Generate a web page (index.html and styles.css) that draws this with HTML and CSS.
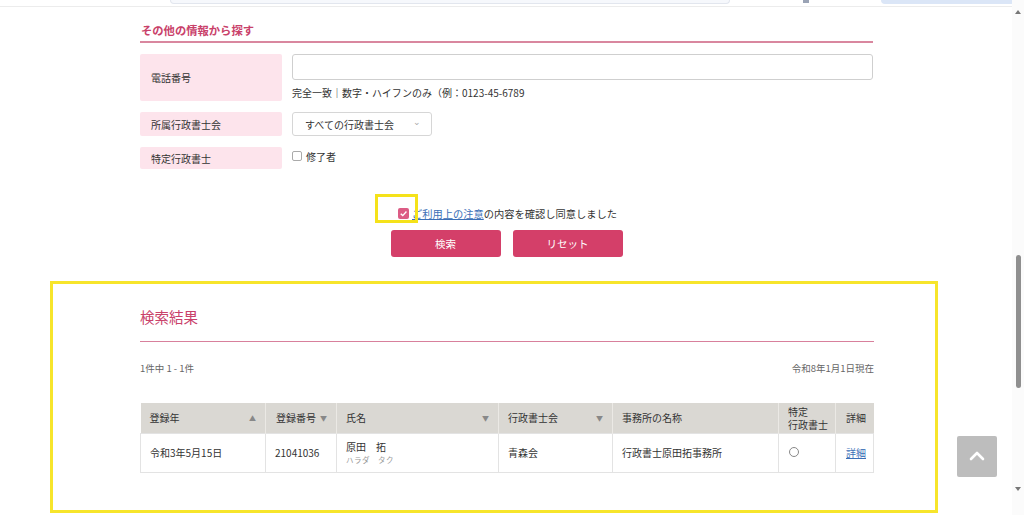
FILE: index.html
```html
<!DOCTYPE html>
<html lang="ja">
<head>
<meta charset="utf-8">
<link rel="stylesheet" href="styles.css">
</head>
<body>
<div class="topstrip">
  <div class="ts-search"></div>
  <div class="ts-icon"></div>
  <div class="ts-btn"></div>
</div>

<section class="other">
  <h2 class="sec-title">その他の情報から探す</h2>
  <div class="form-row row-tel">
    <div class="label">電話番号</div>
    <div class="field">
      <div class="input"></div>
      <p class="help">完全一致｜数字・ハイフンのみ（例：0123-45-6789</p>
    </div>
  </div>
  <div class="form-row row-sel">
    <div class="label">所属行政書士会</div>
    <div class="field">
      <div class="select"><span>すべての行政書士会</span><span class="chev">&#8964;</span></div>
    </div>
  </div>
  <div class="form-row row-chk">
    <div class="label">特定行政書士</div>
    <div class="field check-field">
      <span class="box"></span><span>修了者</span>
    </div>
  </div>

  <div class="agree">
    <span class="agree-inner">
      <span class="hl"></span>
      <span class="pinkbox"><svg viewBox="0 0 12 12" width="11" height="11"><path d="M3 6.2 L5.2 8.3 L9.2 3.8" fill="none" stroke="#fff" stroke-width="1.5"/></svg></span>
      <span class="agree-text"><a class="link">ご利用上の注意</a>の内容を確認し同意しました</span>
    </span>
  </div>
  <div class="buttons">
    <button class="btn">検索</button>
    <button class="btn">リセット</button>
  </div>
</section>

<section class="results">
  <h2 class="res-title">検索結果</h2>
  <div class="meta">
    <span>1件中 1 - 1件</span>
    <span>令和8年1月1日現在</span>
  </div>
  <table class="tbl">
    <colgroup>
      <col class="c1"><col class="c2"><col class="c3"><col class="c4"><col class="c5"><col class="c6"><col class="c7">
    </colgroup>
    <thead>
      <tr>
        <th><div class="th-in"><span>登録年</span><span class="arr">&#9650;</span></div></th>
        <th class="narrow"><div class="th-in tight"><span>登録番号</span><span class="arr">&#9660;</span></div></th>
        <th><div class="th-in"><span>氏名</span><span class="arr">&#9660;</span></div></th>
        <th><div class="th-in"><span>行政書士会</span><span class="arr">&#9660;</span></div></th>
        <th>事務所の名称</th>
        <th class="two"><div>特定</div><div>行政書士</div></th>
        <th class="narrow">詳細</th>
      </tr>
    </thead>
    <tbody>
      <tr>
        <td>令和3年5月15日</td>
        <td>21041036</td>
        <td><div class="name">原田　拓</div><div class="kana">ハラダ　タク</div></td>
        <td>青森会</td>
        <td>行政書士原田拓事務所</td>
        <td><span class="circle"></span></td>
        <td class="narrow"><a class="link">詳細</a></td>
      </tr>
    </tbody>
  </table>
</section>

<div class="totop"><svg viewBox="0 0 40 40" width="40" height="40"><path d="M14 23 L20 17 L26 23" fill="none" stroke="#fff" stroke-width="2.6" stroke-linecap="round" stroke-linejoin="round"/></svg></div>

<div class="scrollbar">
  <span class="sb-up"></span>
  <span class="sb-thumb"></span>
  <span class="sb-down"></span>
</div>
</body>
</html>
```

FILE: styles.css
```css
* { box-sizing: border-box; }
html, body { margin: 0; padding: 0; height: 515px; overflow: hidden; }
body {
  background: #fff;
  font-family: "Noto Sans CJK JP", "Noto Sans", sans-serif;
  color: #333;
  font-size: 10px;
  position: relative;
}

.topstrip {
  height: 7px;
  border-bottom: 1px solid #ececec;
  display: flex;
  align-items: flex-start;
}
.ts-search {
  margin-left: 170px;
  width: 560px;
  height: 4px;
  border: 1px solid #e2e6ee;
  border-top: none;
  border-radius: 0 0 4px 4px;
  background: #f6f8fc;
}
.ts-icon {
  margin-left: 73px;
  width: 6px;
  height: 3px;
  background: #9aa3b5;
}
.ts-btn {
  margin-left: 72px;
  width: 134px;
  height: 4px;
  background: #dbe6f7;
  border-radius: 0 0 4px 4px;
}

.other {
  margin-left: 140px;
  width: 733px;
}
.sec-title {
  margin: 0;
  padding: 15px 0 3px 1px;
  font-size: 11.3px;
  font-weight: 700;
  color: #c9416a;
  line-height: 16px;
  border-bottom: 2px solid #d9879f;
}

.form-row {
  display: flex;
  gap: 10px;
  margin-top: 11px;
}
.label {
  width: 142px;
  flex: none;
  background: #fde4ec;
  border-radius: 2px;
  padding-left: 11px;
  display: flex;
  align-items: center;
  font-size: 10px;
  color: #333;
}
.field { flex: 1; }
.row-tel .label { height: 47px; }
.input {
  height: 26px;
  border: 1px solid #cfcfcf;
  border-radius: 3px;
  background: #fff;
}
.help {
  margin: 5px 0 0;
  line-height: 16px;
  font-size: 10px;
  color: #333;
}
.row-sel .label { height: 24px; }
.select {
  width: 140px;
  height: 24px;
  border: 1px solid #d6d6d6;
  border-radius: 3px;
  display: flex;
  align-items: center;
  justify-content: space-between;
  padding: 0 10px 0 12px;
  font-size: 10px;
}
.chev { color: #aaa; font-size: 9px; line-height: 1; margin-top: -5px; }
.row-chk .label { height: 22px; }
.check-field {
  display: flex;
  align-items: center;
  gap: 4px;
  height: 18px;
  font-size: 10px;
}
.box {
  width: 10px; height: 10px;
  border: 1px solid #aaa;
  border-radius: 2px;
  background: #fff;
}

.agree {
  margin-top: 35px;
  display: flex;
  justify-content: center;
  padding-left: 2px;
}
.agree-inner {
  position: relative;
  display: flex;
  align-items: center;
  gap: 3px;
  height: 18px;
  font-size: 10.25px;
}
.hl {
  position: absolute;
  left: -23px;
  top: -10px;
  width: 43px;
  height: 29px;
  border: 3px solid #f5e21a;
}
.pinkbox {
  width: 11px; height: 11px;
  border-radius: 2px;
  background: #dc5c85;
  display: flex;
  align-items: center;
  justify-content: center;
}
.pinkbox svg { display: block; }
.link {
  color: #3b6fb6;
  text-decoration: underline;
}

.buttons {
  margin-top: 8px;
  display: flex;
  justify-content: center;
  gap: 12px;
}
.btn {
  width: 110px;
  height: 27px;
  border: none;
  border-radius: 3px;
  background: #d43f69;
  color: #fff;
  font-family: inherit;
  font-size: 10.5px;
  padding: 0;
}

.results {
  margin: 24px 0 0 50px;
  width: 888px;
  height: 232px;
  border: 3px solid #f7e52b;
  padding: 20px 61px 0 87px;
}
.res-title {
  margin: 0;
  font-size: 14.5px;
  font-weight: 400;
  color: #c9416a;
  line-height: 26px;
  padding-bottom: 11px;
  border-bottom: 1px solid #d8809c;
}
.meta {
  display: flex;
  justify-content: space-between;
  margin-top: 18px;
  line-height: 16px;
  font-size: 9.5px;
  color: #666;
}

.tbl {
  margin-top: 27px;
  width: 733px;
  border-collapse: collapse;
  table-layout: fixed;
  font-size: 10px;
}
.c1 { width: 125px; } .c2 { width: 71px; } .c3 { width: 162px; }
.c4 { width: 114px; } .c5 { width: 166px; } .c6 { width: 57px; } .c7 { width: 38px; }
.tbl th {
  background: #dad8d3;
  font-weight: 400;
  text-align: left;
  height: 30px;
  padding: 0 9px;
  border-right: 1px solid #ebe9e5;
  line-height: 12px;
  color: #333;
  white-space: nowrap;
}
.tbl th:last-child { border-right: none; }
.tbl th.narrow, .tbl td.narrow { padding: 0 3px 0 10px; }
.tbl th.two { padding: 0 0 0 9px; line-height: 13px; }
.th-in { display: flex; justify-content: space-between; align-items: center; }
.th-in.tight { justify-content: flex-start; gap: 4px; }
.arr { color: #888; font-size: 7px; }
.tbl td {
  height: 39px;
  padding: 0 9px;
  border: 1px solid #e3e3e3;
  background: #fff;
  color: #333;
  white-space: nowrap;
}
.name { line-height: 14px; }
.kana { font-size: 7.5px; color: #999; line-height: 12px; letter-spacing: 0.5px; }
.circle {
  display: inline-block;
  width: 10px; height: 10px;
  border: 1px solid #888;
  border-radius: 50%;
  margin-left: 1px;
}

.totop {
  position: absolute;
  left: 957px;
  top: 436px;
  width: 40px;
  height: 41px;
  background: #bdbdbd;
  border-radius: 2px;
}
.totop svg { display: block; }

.scrollbar {
  position: absolute;
  right: 0;
  top: 0;
  width: 12px;
  height: 515px;
  background: #fbfbfb;
}
.sb-up, .sb-down {
  position: absolute;
  left: 3px;
  width: 0; height: 0;
  border-left: 3px solid transparent;
  border-right: 3px solid transparent;
}
.sb-up { top: 10px; border-bottom: 4px solid #777; }
.sb-down { top: 487px; border-top: 4px solid #777; }
.sb-thumb {
  position: absolute;
  left: 4px;
  top: 255px;
  width: 5px;
  height: 133px;
  border-radius: 3px;
  background: #8f8f8f;
}
```
